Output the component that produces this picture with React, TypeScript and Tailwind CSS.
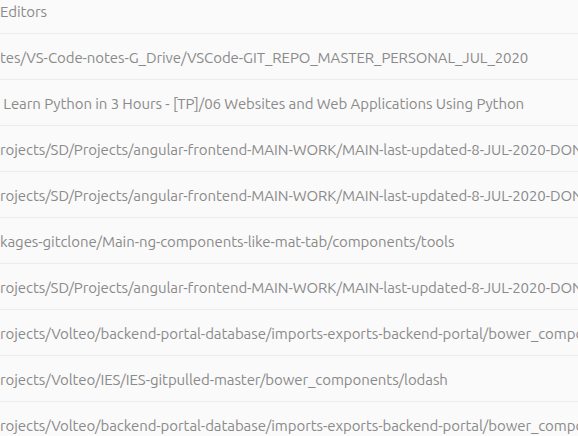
const rows = [
  "tes/VS-Code-notes-G_Drive/VSCode-GIT_REPO_MASTER_PERSONAL_JUL_2020",
  " Learn Python in 3 Hours - [TP]/06 Websites and Web Applications Using Python",
  "rojects/SD/Projects/angular-frontend-MAIN-WORK/MAIN-last-updated-8-JUL-2020-DONE",
  "rojects/SD/Projects/angular-frontend-MAIN-WORK/MAIN-last-updated-8-JUL-2020-DONE",
  "kages-gitclone/Main-ng-components-like-mat-tab/components/tools",
  "rojects/SD/Projects/angular-frontend-MAIN-WORK/MAIN-last-updated-8-JUL-2020-DONE",
  "rojects/Volteo/backend-portal-database/imports-exports-backend-portal/bower_components",
  "rojects/Volteo/IES/IES-gitpulled-master/bower_components/lodash",
  "rojects/Volteo/backend-portal-database/imports-exports-backend-portal/bower_components",
]

export default function App() {
  return (
    <div className="h-[436px] w-[578px] overflow-hidden bg-[#fafafa] font-['Ubuntu','Noto_Sans',sans-serif] text-[15px] tracking-[-0.08px] text-[#8a8a8a]">
      <div className="flex h-[34px] items-center border-b border-[#ececec] pb-[8px]">
        <span className="whitespace-pre">Editors</span>
      </div>
      {rows.map((r, i) => (
        <div key={i} className="flex h-[46px] items-center border-b border-[#ececec] pt-[4px]">
          <span className="whitespace-pre">{r}</span>
        </div>
      ))}
    </div>
  )
}
